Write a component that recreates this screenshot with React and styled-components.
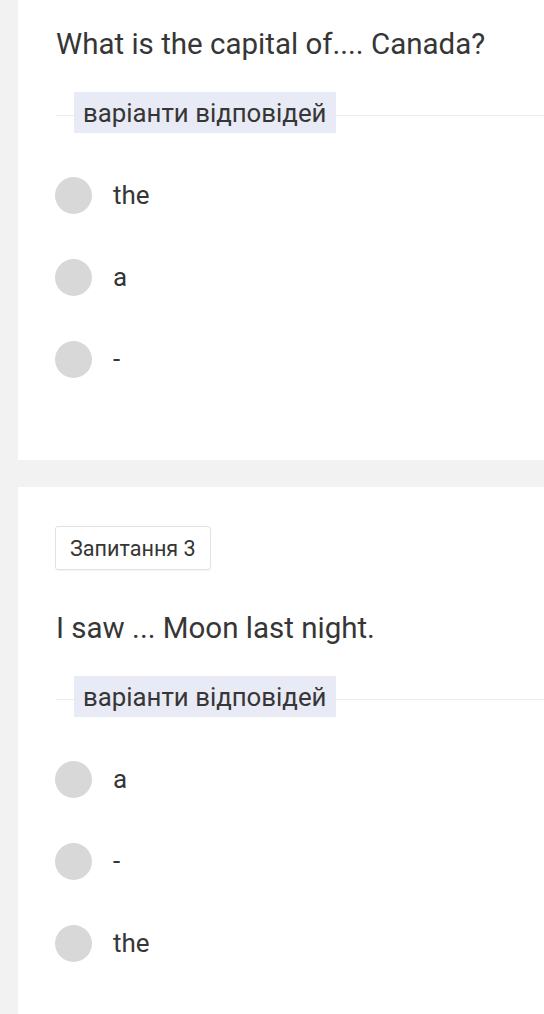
import React from 'react';
import styled, { createGlobalStyle } from 'styled-components';

const GlobalStyle = createGlobalStyle`
  html, body {
    margin: 0;
    padding: 0;
    background: #f2f2f2;
  }
  body {
    font-family: Roboto, "Noto Sans", "Liberation Sans", sans-serif;
    color: #363636;
  }
`;

const questions = [
  {
    id: 2,
    text: 'What is the capital of.... Canada?',
    options: ['the', 'a', '-'],
    hideBadge: true,
  },
  {
    id: 3,
    text: 'I saw ... Moon last night.',
    options: ['a', '-', 'the'],
  },
];

const App = () => (
  <>
    <GlobalStyle />
    <Page>
      {questions.map((q) => (
        <Card key={q.id} first={q.hideBadge}>
          {!q.hideBadge && <Badge>Запитання {q.id}</Badge>}
          <QuestionText withBadge={!q.hideBadge}>{q.text}</QuestionText>
          <AnswersHeader>
            <AnswersLabel>варіанти відповідей</AnswersLabel>
          </AnswersHeader>
          <OptionList>
            {q.options.map((opt, i) => (
              <Option key={i}>
                <Radio />
                <OptionText>{opt}</OptionText>
              </Option>
            ))}
          </OptionList>
        </Card>
      ))}
    </Page>
  </>
);

const Page = styled.div`
  display: flex;
  flex-direction: column;
  gap: 27px;
  padding-left: 18px;
  min-height: 1014px;
`;

const Card = styled.div`
  background: #fff;
  padding: ${(p) => (p.first ? '26px' : '39px')} 0 60px 38px;
`;

const Badge = styled.div`
  display: inline-flex;
  align-items: center;
  height: 42px;
  padding: 0 14px;
  margin-left: -1px;
  border: 1px solid #e2e2e2;
  border-radius: 3px;
  box-shadow: 0 1px 1px rgba(0, 0, 0, 0.05);
  font-size: 21.6px;
  color: #363636;
  box-sizing: content-box;
`;

const QuestionText = styled.div`
  margin-top: ${(p) => (p.withBadge ? '40px' : '0')};
  font-size: 29.5px;
  line-height: 36px;
  color: #363636;
`;

const AnswersHeader = styled.div`
  position: relative;
  margin-top: 30px;
  height: 41px;

  &::before {
    content: '';
    position: absolute;
    left: 0;
    right: 0;
    top: 23px;
    height: 1px;
    background: #ececec;
  }
`;

const AnswersLabel = styled.span`
  position: relative;
  display: inline-flex;
  align-items: center;
  height: 41px;
  margin-left: 18px;
  padding: 0 9px;
  background: #e8eaf5;
  font-size: 25.8px;
  color: #363636;
`;

const OptionList = styled.div`
  display: flex;
  flex-direction: column;
  margin-top: 21px;
`;

const Option = styled.div`
  display: flex;
  align-items: center;
  height: 82px;
`;

const Radio = styled.div`
  width: 37px;
  height: 37px;
  border-radius: 50%;
  background: #d8d8d8;
  margin-left: -1px;
  flex-shrink: 0;
`;

const OptionText = styled.span`
  margin-left: 21px;
  font-size: 26px;
  color: #363636;
`;

export default App;
